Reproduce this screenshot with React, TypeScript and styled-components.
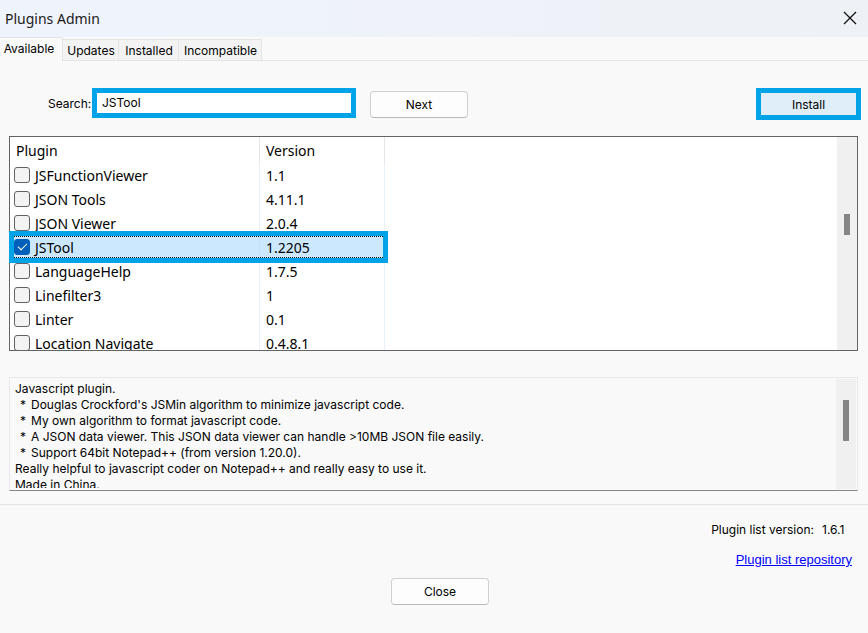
import React, { useState } from "react";
import styled, { createGlobalStyle, css } from "styled-components";

const ui = 'Inter, "Noto Sans", sans-serif';
const list = '"Noto Sans", "Open Sans", sans-serif';
const mark = "#00a2e8";

const GlobalStyle = createGlobalStyle`
  * { box-sizing: border-box; }
  body { margin: 0; background: #f9f9f9; color: #000; font: 12px/16px ${ui}; }
  button, input { font: inherit; color: inherit; margin: 0; }
`;

const Dialog = styled.main`
  display: flex;
  flex-direction: column;
  min-height: 100vh;
  background: #f9f9f9;
`;

const TitleBar = styled.header`
  display: flex;
  align-items: center;
  justify-content: space-between;
  height: 37px;
  padding: 0 11px 0 5px;
  background: linear-gradient(90deg, #eff3fb, #eef2f7);
`;

const Title = styled.h1`
  margin: 0;
  font: 14px/20px ${list};
  color: #1a1a1a;
`;

const CloseIcon = styled.button`
  display: flex;
  padding: 0 0 1px;
  border: 0;
  background: none;
`;

const Tabs = styled.nav`
  display: flex;
  align-items: flex-end;
  height: 24px;
  &::after {
    content: "";
    flex: 1;
    border-bottom: 1px solid #e5e5e5;
  }
`;

const Tab = styled.button<{ $active?: boolean; $width: number }>`
  width: ${(p) => p.$width}px;
  height: ${(p) => (p.$active ? 24 : 22)}px;
  padding: ${(p) => (p.$active ? "0 4px 1px 0" : "1px 0 0 1px")};
  border: solid #e5e5e5;
  border-width: ${(p) => (p.$active ? "1px 1px 0 0" : "1px 1px 1px 0")};
  background: ${(p) => (p.$active ? "#f9f9f9" : "#f3f3f3")};
  white-space: nowrap;
`;

const SearchRow = styled.form`
  display: flex;
  align-items: center;
  margin-top: 27px;
  padding: 0 7px 0 48px;
  height: 32px;
`;

const SearchLabel = styled.label`
  width: 44px;
  white-space: nowrap;
`;

const SearchInput = styled.input`
  width: 264px;
  height: 30px;
  margin: 0 14px 2px 0;
  padding: 0 5px 1px;
  border: 5px solid ${mark};
  background: #fff;
  outline: 0;
`;

const Button = styled.button`
  width: 98px;
  height: 27px;
  padding: 1px 0 0;
  border: 1px solid #d0d0d0;
  border-bottom-color: #b8b8b8;
  border-radius: 4px;
  background: #fdfdfd;
`;

const InstallButton = styled(Button)`
  width: 105px;
  height: 32px;
  margin-left: auto;
  border: 5px solid ${mark};
  border-radius: 0;
  background: #e0eef9;
`;

const ListPanel = styled.section`
  display: flex;
  height: 215px;
  margin: 16px 10px 0 9px;
  border: 1px solid #646464;
  background: #fff;
`;

const Viewport = styled.div`
  flex: 1;
  overflow-x: visible;
  overflow-y: clip;
`;

const Table = styled.table`
  width: 375px;
  table-layout: fixed;
  border-collapse: separate;
  border-spacing: 0;
  font: 14px/20px ${list};
`;

const Head = styled.th<{ $width: number }>`
  width: ${(p) => p.$width}px;
  height: 26px;
  padding: 1px 6px 0;
  border-right: 1px solid #e5e5e5;
  text-align: left;
  font-weight: 400;
`;

const Row = styled.tr<{ $marked: boolean }>`
  ${(p) =>
    p.$marked &&
    css`
      position: relative;
      z-index: 1;
      background: #cce8ff;
      &::after {
        content: "";
        position: absolute;
        inset: -4px -3px -4px -1px;
        border: 5px solid ${mark};
        pointer-events: none;
      }
    `}
`;

const Cell = styled.td<{ $marked: boolean }>`
  height: 24px;
  padding: 1px 6px 0;
  border-right: 1px solid ${(p) => (p.$marked ? "#c2e2fb" : "#e8f1fa")};
  white-space: nowrap;
  ${(p) =>
    p.$marked &&
    css`
      background:
        linear-gradient(90deg, #000 50%, transparent 0) 0 1px / 2px 1px repeat-x border-box,
        linear-gradient(90deg, #000 50%, transparent 0) 0 22px / 2px 1px repeat-x border-box;
    `}
  &:first-child {
    padding: 1px 4px 0;
  }
`;

const CheckLabel = styled.label`
  display: flex;
  align-items: center;
  gap: 5px;
`;

const Check = styled.input`
  appearance: none;
  display: grid;
  place-items: center;
  width: 16px;
  height: 16px;
  margin: 0 0 2px;
  border: 1px solid #626262;
  border-radius: 3px;
  background: #f3f3f3;
  &:checked {
    border-color: #005fb8;
    background: #005fb8;
  }
  &:checked::after {
    content: "";
    width: 8px;
    height: 4px;
    margin-bottom: 2px;
    border: solid #fff;
    border-width: 0 0 1px 1px;
    transform: rotate(-45deg);
  }
`;

const ScrollTrack = styled.div<{ $offset: number }>`
  flex: none;
  width: 20px;
  padding: ${(p) => p.$offset}px 7px 0;
  background: #f0f0f0;
`;

const ScrollThumb = styled.div<{ $size: number }>`
  width: 6px;
  height: ${(p) => p.$size}px;
  background: #868686;
`;

const Description = styled.section`
  display: flex;
  height: 114px;
  margin: 26px 10px 0 9px;
  padding: 1px;
  border: 1px solid #e8e8e8;
  border-bottom-color: #868686;
`;

const DescriptionText = styled.div`
  flex: 1;
  height: 109px;
  padding: 2px 4px 0;
  overflow: hidden;
`;

const Line = styled.p`
  margin: 0;
`;

const Bullet = styled(Line)`
  display: flex;
  padding-left: 5px;
  &::before {
    content: "*";
    width: 11px;
  }
`;

const Footer = styled.footer`
  display: flex;
  flex-direction: column;
  align-items: flex-end;
  margin-top: 13px;
  padding: 17px 16px 0 28px;
  border-top: 1px solid #e3e3e3;
`;

const Version = styled.div`
  display: flex;
  gap: 8px;
`;

const VersionNumber = styled.span`
  min-width: 30px;
`;

const RepoLink = styled.a`
  margin-top: 14px;
  font: 13px/16px "Liberation Sans", Arial, sans-serif;
  color: #0000ff;
`;

const CloseButton = styled(Button)`
  align-self: center;
  margin-top: 10px;
`;

const plugins = [
  ["JSFunctionViewer", "1.1"],
  ["JSON Tools", "4.11.1"],
  ["JSON Viewer", "2.0.4"],
  ["JSTool", "1.2205"],
  ["LanguageHelp", "1.7.5"],
  ["Linefilter3", "1"],
  ["Linter", "0.1"],
  ["Location Navigate", "0.4.8.1"],
];

const tabs: [string, number][] = [
  ["Available", 63],
  ["Updates", 56],
  ["Installed", 60],
  ["Incompatible", 83],
];

const features = [
  "Douglas Crockford's JSMin algorithm to minimize javascript code.",
  "My own algorithm to format javascript code.",
  "A JSON data viewer. This JSON data viewer can handle >10MB JSON file easily.",
  "Support 64bit Notepad++ (from version 1.20.0).",
];

export default function App() {
  const [query, setQuery] = useState("JSTool");
  const [checked, setChecked] = useState<string[]>(["JSTool"]);
  const toggle = (name: string) =>
    setChecked((c) => (c.includes(name) ? c.filter((n) => n !== name) : [...c, name]));

  return (
    <Dialog>
      <GlobalStyle />
      <TitleBar>
        <Title>Plugins Admin</Title>
        <CloseIcon aria-label="Close window">
          <svg width="14" height="14" viewBox="0 0 14 14" fill="none" stroke="#111" strokeWidth="1.3">
            <path d="M1 1 13 13M13 1 1 13" />
          </svg>
        </CloseIcon>
      </TitleBar>
      <Tabs>
        {tabs.map(([name, width]) => (
          <Tab key={name} $width={width} $active={name === "Available"}>
            {name}
          </Tab>
        ))}
      </Tabs>
      <SearchRow onSubmit={(e) => e.preventDefault()}>
        <SearchLabel htmlFor="search">Search:</SearchLabel>
        <SearchInput id="search" value={query} onChange={(e) => setQuery(e.target.value)} />
        <Button>Next</Button>
        <InstallButton type="button">Install</InstallButton>
      </SearchRow>
      <ListPanel>
        <Viewport>
          <Table>
            <thead>
              <tr>
                <Head $width={250}>Plugin</Head>
                <Head $width={125}>Version</Head>
              </tr>
            </thead>
            <tbody>
              {plugins.map(([name, version]) => {
                const marked = name === "JSTool";
                return (
                  <Row key={name} $marked={marked}>
                    <Cell $marked={marked}>
                      <CheckLabel>
                        <Check type="checkbox" checked={checked.includes(name)} onChange={() => toggle(name)} />
                        {name}
                      </CheckLabel>
                    </Cell>
                    <Cell $marked={marked}>{version}</Cell>
                  </Row>
                );
              })}
            </tbody>
          </Table>
        </Viewport>
        <ScrollTrack $offset={77}>
          <ScrollThumb $size={21} />
        </ScrollTrack>
      </ListPanel>
      <Description>
        <DescriptionText>
          <Line>Javascript plugin.</Line>
          {features.map((text) => (
            <Bullet key={text}>{text}</Bullet>
          ))}
          <Line>Really helpful to javascript coder on Notepad++ and really easy to use it.</Line>
          <Line>Made in China.</Line>
        </DescriptionText>
        <ScrollTrack $offset={21}>
          <ScrollThumb $size={41} />
        </ScrollTrack>
      </Description>
      <Footer>
        <Version>
          <span>Plugin list version:</span>
          <VersionNumber>1.6.1</VersionNumber>
        </Version>
        <RepoLink href="#repository">Plugin list repository</RepoLink>
        <CloseButton>Close</CloseButton>
      </Footer>
    </Dialog>
  );
}
